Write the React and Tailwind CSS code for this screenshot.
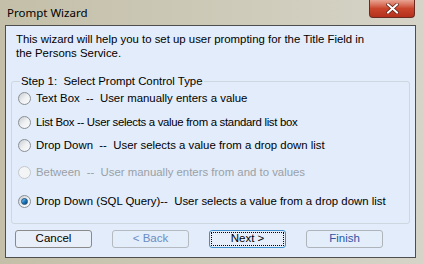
import { useState } from "react";

const options = [
  { label: "Text Box  --  User manually enters a value", gap: "mt-[3px]" },
  { label: "List Box -- User selects a value from a standard list box", gap: "mt-[10px]", tight: true },
  { label: "Drop Down  --  User selects a value from a drop down list", gap: "mt-[9px]" },
  { label: "Between  --  User manually enters from and to values", gap: "mt-[13px]", disabled: true },
  { label: "Drop Down (SQL Query)--  User selects a value from a drop down list", gap: "mt-[15px]" },
];

function Radio({ checked, disabled }) {
  return (
    <span
      className={`relative flex h-[13px] w-[13px] shrink-0 items-center justify-center rounded-full border ${
        disabled ? "border-[#c4c8cc] bg-[#f2f4f6]" : "border-[#8a8f94] bg-gradient-to-br from-[#c9cdd1] via-[#eef0f2] to-[#fafbfc]"
      }`}
    >
      {checked && (
        <span className="h-[7px] w-[7px] rounded-full border border-[#1b4f7e] bg-gradient-to-br from-[#8fd0f5] via-[#1d7fc4] to-[#0b3f70]" />
      )}
    </span>
  );
}

function Button({ children, tone, focused }) {
  const look = focused
    ? "border-[#3d8ec9] bg-[#e6eefa] text-black"
    : tone === "back"
    ? "border-[#b4bac0] bg-[#e4edfa] text-[#6a8cc4]"
    : tone === "finish"
    ? "border-[#aeb4ba] bg-[#e4edfa] text-[#2f55a3]"
    : "border-[#8a8a8a] bg-[#e9eff8] text-black";
  return (
    <button className={`h-[18px] w-[77px] rounded-[3px] border p-[1px] text-[11.5px] leading-none ${look}`}>
      <span
        className={`flex h-full w-full items-center justify-center ${focused ? "border border-dotted border-black" : ""}`}
      >
        {children}
      </span>
    </button>
  );
}

export default function App() {
  const [choice, setChoice] = useState(4);

  return (
    <div className="flex h-[264px] w-[423px] flex-col bg-gradient-to-r from-[#c3bfa8] to-[#d6d4c8] font-['Liberation_Sans',sans-serif] text-[11.4px] text-black">
      <div className="flex h-[25px] shrink-0 items-start justify-between">
        <span className="pl-[7px] pt-[5px] font-['Noto_Sans',sans-serif] text-[11.5px] leading-[15px]">Prompt Wizard</span>
        <div className="mr-[8px] flex h-[18px] w-[46px] items-center justify-center rounded-b-[4px] border border-t-0 border-[#6b2a20] bg-gradient-to-b from-[#e8a493] via-[#c9452c] to-[#b5301c]">
          <svg width="13" height="11" viewBox="0 0 13 11">
            <path d="M2 1.5 L11 9.5 M11 1.5 L2 9.5" stroke="#5a1a10" strokeWidth="3.4" strokeLinecap="square" />
            <path d="M2 1.5 L11 9.5 M11 1.5 L2 9.5" stroke="#ffffff" strokeWidth="2" strokeLinecap="square" />
          </svg>
        </div>
      </div>

      <div className="ml-[5px] mr-[7px] mb-[6px] flex flex-1 flex-col border border-[#4e4e4e] bg-[#e2ecfb]">
        <p className="pl-[10px] pt-[6px] leading-[14px]">
          This wizard will help you to set up user prompting for the Title Field in
          <br />
          the Persons Service.
        </p>

        <fieldset className="mx-[5px] mt-[14px] h-[150px] rounded-[3px] border border-[#cdd7e0] pl-[6px]">
          <legend className="ml-[2px] px-[1px] leading-[14px]">Step 1:&nbsp; Select Prompt Control Type</legend>
          {options.map((o, i) => (
            <label
              key={i}
              onClick={() => !o.disabled && setChoice(i)}
              className={`flex items-center gap-[5px] whitespace-pre leading-[14px] ${o.gap} ${
                o.disabled ? "text-[#9aa0a6]" : ""
              } ${o.tight ? "tracking-[-0.3px]" : ""}`}
            >
              <Radio checked={choice === i} disabled={o.disabled} />
              <span>{o.label}</span>
            </label>
          ))}
        </fieldset>

        <div className="mt-[6px] flex gap-[20px] pl-[9px]">
          <Button>Cancel</Button>
          <Button tone="back">&lt; Back</Button>
          <Button focused>Next &gt;</Button>
          <Button tone="finish">Finish</Button>
        </div>
      </div>
    </div>
  );
}
